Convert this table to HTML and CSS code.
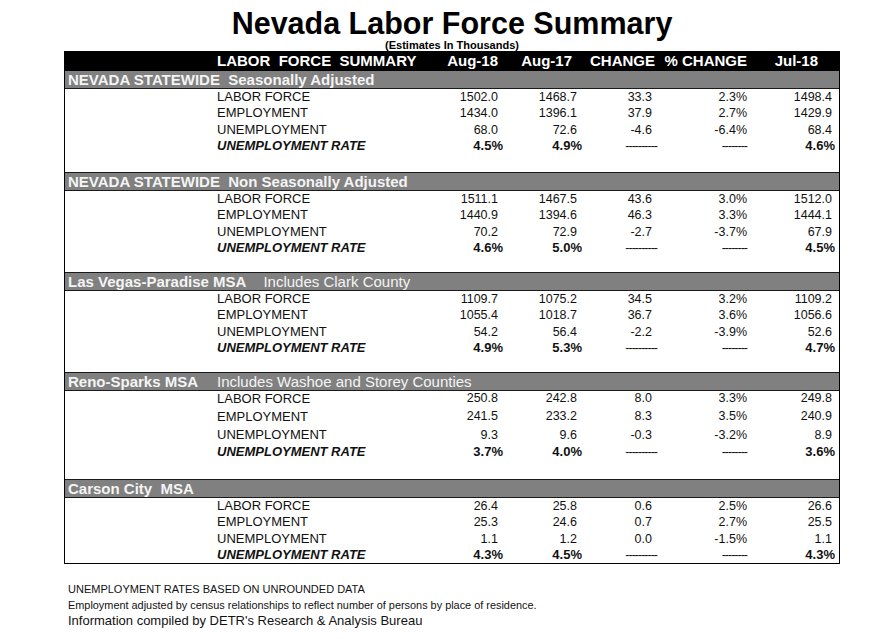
FILE: index.html
```html
<!DOCTYPE html>
<html lang="en">
<head>
<meta charset="utf-8">
<title>Nevada Labor Force Summary</title>
<link rel="stylesheet" href="styles.css">
</head>
<body>
<div class="page">
  <h1 class="title">Nevada Labor Force Summary</h1>
  <div class="subtitle">(Estimates In Thousands)</div>
  <div class="sheet">
    <div class="thead">
      <span></span>
      <span class="th-label">LABOR  FORCE  SUMMARY</span>
      <span class="th">Aug-18</span>
      <span class="th">Aug-17</span>
      <span class="th">CHANGE</span>
      <span class="th">% CHANGE</span>
      <span class="th">Jul-18</span>
    </div>

    <section class="sec sp-lg">
      <div class="sec-head"><b>NEVADA STATEWIDE  Seasonally Adjusted</b></div>
      <div class="row"><span></span><span class="lbl">LABOR FORCE</span><span>1502.0</span><span>1468.7</span><span>33.3</span><span>2.3%</span><span>1498.4</span></div>
      <div class="row"><span></span><span class="lbl">EMPLOYMENT</span><span>1434.0</span><span>1396.1</span><span>37.9</span><span>2.7%</span><span>1429.9</span></div>
      <div class="row"><span></span><span class="lbl">UNEMPLOYMENT</span><span>68.0</span><span>72.6</span><span>-4.6</span><span>-6.4%</span><span>68.4</span></div>
      <div class="row rate"><span></span><span class="lbl">UNEMPLOYMENT RATE</span><span>4.5%</span><span>4.9%</span><span class="dash">----------</span><span class="dash">--------</span><span>4.6%</span></div>
    </section>

    <section class="sec sp-md">
      <div class="sec-head"><b>NEVADA STATEWIDE  Non Seasonally Adjusted</b></div>
      <div class="row"><span></span><span class="lbl">LABOR FORCE</span><span>1511.1</span><span>1467.5</span><span>43.6</span><span>3.0%</span><span>1512.0</span></div>
      <div class="row"><span></span><span class="lbl">EMPLOYMENT</span><span>1440.9</span><span>1394.6</span><span>46.3</span><span>3.3%</span><span>1444.1</span></div>
      <div class="row"><span></span><span class="lbl">UNEMPLOYMENT</span><span>70.2</span><span>72.9</span><span>-2.7</span><span>-3.7%</span><span>67.9</span></div>
      <div class="row rate"><span></span><span class="lbl">UNEMPLOYMENT RATE</span><span>4.6%</span><span>5.0%</span><span class="dash">----------</span><span class="dash">--------</span><span>4.5%</span></div>
    </section>

    <section class="sec sp-md">
      <div class="sec-head"><b>Las Vegas-Paradise MSA</b><span class="sub sub-lv">Includes Clark County</span></div>
      <div class="row"><span></span><span class="lbl">LABOR FORCE</span><span>1109.7</span><span>1075.2</span><span>34.5</span><span>3.2%</span><span>1109.2</span></div>
      <div class="row"><span></span><span class="lbl">EMPLOYMENT</span><span>1055.4</span><span>1018.7</span><span>36.7</span><span>3.6%</span><span>1056.6</span></div>
      <div class="row"><span></span><span class="lbl">UNEMPLOYMENT</span><span>54.2</span><span>56.4</span><span>-2.2</span><span>-3.9%</span><span>52.6</span></div>
      <div class="row rate"><span></span><span class="lbl">UNEMPLOYMENT RATE</span><span>4.9%</span><span>5.3%</span><span class="dash">----------</span><span class="dash">--------</span><span>4.7%</span></div>
    </section>

    <section class="sec sp-lg">
      <div class="sec-head"><b>Reno-Sparks MSA</b><span class="sub sub-reno">Includes Washoe and Storey Counties</span></div>
      <div class="row h15"><span></span><span class="lbl">LABOR FORCE</span><span>250.8</span><span>242.8</span><span>8.0</span><span>3.3%</span><span>249.8</span></div>
      <div class="row h21"><span></span><span class="lbl">EMPLOYMENT</span><span>241.5</span><span>233.2</span><span>8.3</span><span>3.5%</span><span>240.9</span></div>
      <div class="row h16"><span></span><span class="lbl">UNEMPLOYMENT</span><span>9.3</span><span>9.6</span><span>-0.3</span><span>-3.2%</span><span>8.9</span></div>
      <div class="row rate h18"><span></span><span class="lbl">UNEMPLOYMENT RATE</span><span>3.7%</span><span>4.0%</span><span class="dash">----------</span><span class="dash">--------</span><span>3.6%</span></div>
    </section>

    <section class="sec">
      <div class="sec-head"><b>Carson City  MSA</b></div>
      <div class="row"><span></span><span class="lbl">LABOR FORCE</span><span>26.4</span><span>25.8</span><span>0.6</span><span>2.5%</span><span>26.6</span></div>
      <div class="row"><span></span><span class="lbl">EMPLOYMENT</span><span>25.3</span><span>24.6</span><span>0.7</span><span>2.7%</span><span>25.5</span></div>
      <div class="row"><span></span><span class="lbl">UNEMPLOYMENT</span><span>1.1</span><span>1.2</span><span>0.0</span><span>-1.5%</span><span>1.1</span></div>
      <div class="row rate"><span></span><span class="lbl">UNEMPLOYMENT RATE</span><span>4.3%</span><span>4.5%</span><span class="dash">----------</span><span class="dash">--------</span><span>4.3%</span></div>
    </section>
  </div>

  <div class="notes">
    <p class="note">UNEMPLOYMENT RATES BASED ON UNROUNDED DATA</p>
    <p class="note note-sm">Employment adjusted by census relationships to reflect number of persons by place of residence.</p>
    <p class="note note-lg">Information compiled by DETR's Research &amp; Analysis Bureau</p>
  </div>
</div>
</body>
</html>
```

FILE: styles.css
```css
html, body {
  margin: 0;
  padding: 0;
  background: #ffffff;
}

body {
  font-family: "Liberation Sans", Arial, sans-serif;
  color: #000;
}

.page {
  width: 889px;
  padding-top: 7px;
}

.title {
  margin: 0 0 0 64px;
  width: 776px;
  text-align: center;
  font-size: 30.5px;
  line-height: 32px;
  font-weight: bold;
  color: #000;
}

.subtitle {
  margin-left: 64px;
  width: 776px;
  text-align: center;
  font-size: 11px;
  line-height: 12px;
  font-weight: bold;
}

.sheet {
  margin-left: 64px;
  width: 776px;
  box-sizing: border-box;
  border-left: 1px solid #000;
  border-right: 1px solid #000;
  border-bottom: 1px solid #000;
}

.thead {
  display: grid;
  grid-template-columns: 152px 213px 68px 74px 83px 92px 71px 1fr;
  height: 19px;
  line-height: 19px;
  background: #000;
  color: #fff;
  font-size: 15px;
  font-weight: bold;
  white-space: pre;
}

.th {
  text-align: right;
}

.sec-head {
  display: flex;
  align-items: baseline;
  box-sizing: border-box;
  height: 19px;
  line-height: 17px;
  padding-left: 3px;
  background: #808080;
  color: #f4f4f4;
  font-size: 15px;
  border-top: 1px solid #1a1a1a;
  border-bottom: 1px solid #1a1a1a;
  white-space: pre;
}

.sec:first-of-type .sec-head {
  border-top-color: #000;
}

.sec-head b {
  font-weight: bold;
}

.sub {
  font-weight: normal;
}

.sub-lv {
  margin-left: 17px;
}

.sub-reno {
  margin-left: 19px;
}

.sp-lg {
  padding-bottom: 18px;
}

.sp-md {
  padding-bottom: 16px;
}

.row {
  display: grid;
  grid-template-columns: 152px 213px 68px 79px 75px 95px 85px 1fr;
  height: 16.25px;
  line-height: 16.25px;
  font-size: 12.5px;
  color: #111;
  white-space: nowrap;
}

.row span {
  text-align: right;
}

.row .lbl {
  text-align: left;
  font-size: 13px;
}

.row.rate {
  grid-template-columns: 152px 213px 73px 79px 75px 90px 88px 1fr;
  font-weight: bold;
  font-size: 13px;
}

.row.rate .lbl {
  font-style: italic;
}

.row.rate .dash {
  font-weight: normal;
  font-size: 12.5px;
  letter-spacing: -1px;
}

.row.h15 { height: 15px; line-height: 15px; }
.row.h21 { height: 21px; line-height: 21px; }
.row.h16 { height: 16px; line-height: 16px; }
.row.h18 { height: 18px; line-height: 18px; }

.notes {
  margin-top: 17px;
  padding-left: 68px;
}

.note {
  margin: 0;
  font-size: 11px;
  line-height: 16px;
  color: #111;
}

.note-sm {
  font-size: 10.9px;
}

.note-lg {
  font-size: 13px;
}
```
